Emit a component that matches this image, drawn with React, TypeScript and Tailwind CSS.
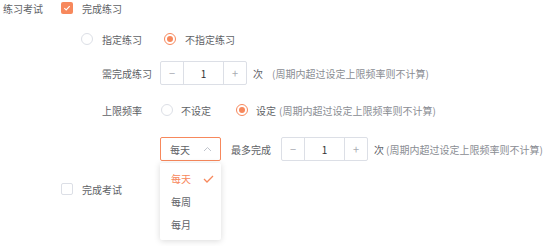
import React from "react";

const ORANGE = "#f7885c";

function Checkbox({ checked }: { checked?: boolean }) {
  return checked ? (
    <span className="flex h-3 w-3 items-center justify-center rounded-[2px] bg-[#f7885c]">
      <svg width="8" height="8" viewBox="0 0 8 8" fill="none">
        <path d="M1.3 4.1 L3.2 5.9 L6.7 2.2" stroke="#fff" strokeWidth="1.1" />
      </svg>
    </span>
  ) : (
    <span className="h-3 w-3 rounded-[2px] border border-[#dcdfe6] bg-white" />
  );
}

function Radio({ checked }: { checked?: boolean }) {
  return checked ? (
    <span className="flex h-3 w-3 items-center justify-center rounded-full border border-[#f7885c] bg-white">
      <span className="h-[6px] w-[6px] rounded-full bg-[#f7885c]" />
    </span>
  ) : (
    <span className="h-3 w-3 rounded-full border border-[#dcdfe6] bg-white" />
  );
}

function Stepper() {
  return (
    <div className="flex h-6 w-[87px] rounded-[2px] border border-[#dcdfe6] bg-white">
      <span className="flex w-[23px] items-center justify-center border-r border-[#dcdfe6] text-[11px] text-[#a8abb2]">
        −
      </span>
      <span className="flex flex-1 items-center justify-center text-[10px] text-[#303133]">1</span>
      <span className="flex w-[23px] items-center justify-center border-l border-[#dcdfe6] text-[11px] text-[#a8abb2]">
        +
      </span>
    </div>
  );
}

const hint = "(周期内超过设定上限频率则不计算)";

export default function App() {
  return (
    <div
      className="relative h-[246px] w-[554px] bg-white text-[10px] text-[#606266]"
      style={{ fontFamily: '"Noto Sans CJK SC", "Noto Sans", sans-serif' }}
    >
      <div className="flex h-4 items-center">
        <span className="ml-[3px] w-[58px]">练习考试</span>
        <Checkbox checked />
        <span className="ml-[9px]">完成练习</span>
      </div>

      <div className="mt-[11px] flex h-6 items-center pl-[81px]">
        <Radio />
        <span className="ml-[9px]">指定练习</span>
        <span className="ml-[22px]">
          <Radio checked />
        </span>
        <span className="ml-[9px]">不指定练习</span>
      </div>

      <div className="mt-[10px] flex h-6 items-center pl-[102px]">
        <span className="w-[58px]">需完成练习</span>
        <Stepper />
        <span className="ml-[6px]">次</span>
        <span className="ml-[9px] text-[#8a8d93]">{hint}</span>
      </div>

      <div className="mt-[13px] flex h-6 items-center pl-[102px]">
        <span className="w-[59px]">上限频率</span>
        <Radio />
        <span className="ml-[8px]">不设定</span>
        <span className="ml-[25px]">
          <Radio checked />
        </span>
        <span className="ml-[8px]">设定</span>
        <span className="ml-[3px] text-[#8a8d93]">{hint}</span>
      </div>

      <div className="mt-[15px] flex h-6 items-center pl-[160px]">
        <div className="flex h-6 w-[61px] items-center justify-between rounded-[2px] border border-[#f7885c] bg-white pl-[9px] pr-[8px]">
          <span>每天</span>
          <svg width="9" height="6" viewBox="0 0 9 6" fill="none">
            <path d="M1 5 L4.5 1.5 L8 5" stroke="#c0c4cc" strokeWidth="1" />
          </svg>
        </div>
        <span className="ml-[10px] w-[50px]">最多完成</span>
        <Stepper />
        <span className="ml-[6px]">次</span>
        <span className="ml-[2px] text-[#8a8d93]">{hint}</span>
      </div>

      <div className="mt-[20px] flex h-4 items-center pl-[61px]">
        <Checkbox />
        <span className="ml-[9px]">完成考试</span>
      </div>

      <div className="absolute left-[160px] top-[163px] w-[61px] rounded-[2px] bg-white py-1 shadow-[0_1px_6px_rgba(0,0,0,0.15)]">
        <div className="flex h-[23px] items-center justify-between pl-[11px] pr-[7px]" style={{ color: ORANGE }}>
          <span>每天</span>
          <svg width="11" height="8" viewBox="0 0 11 8" fill="none">
            <path d="M1 4 L4 7 L10 1" stroke={ORANGE} strokeWidth="1.3" />
          </svg>
        </div>
        <div className="flex h-[23px] items-center pl-[11px]">每周</div>
        <div className="flex h-[23px] items-center pl-[11px]">每月</div>
      </div>
    </div>
  );
}
